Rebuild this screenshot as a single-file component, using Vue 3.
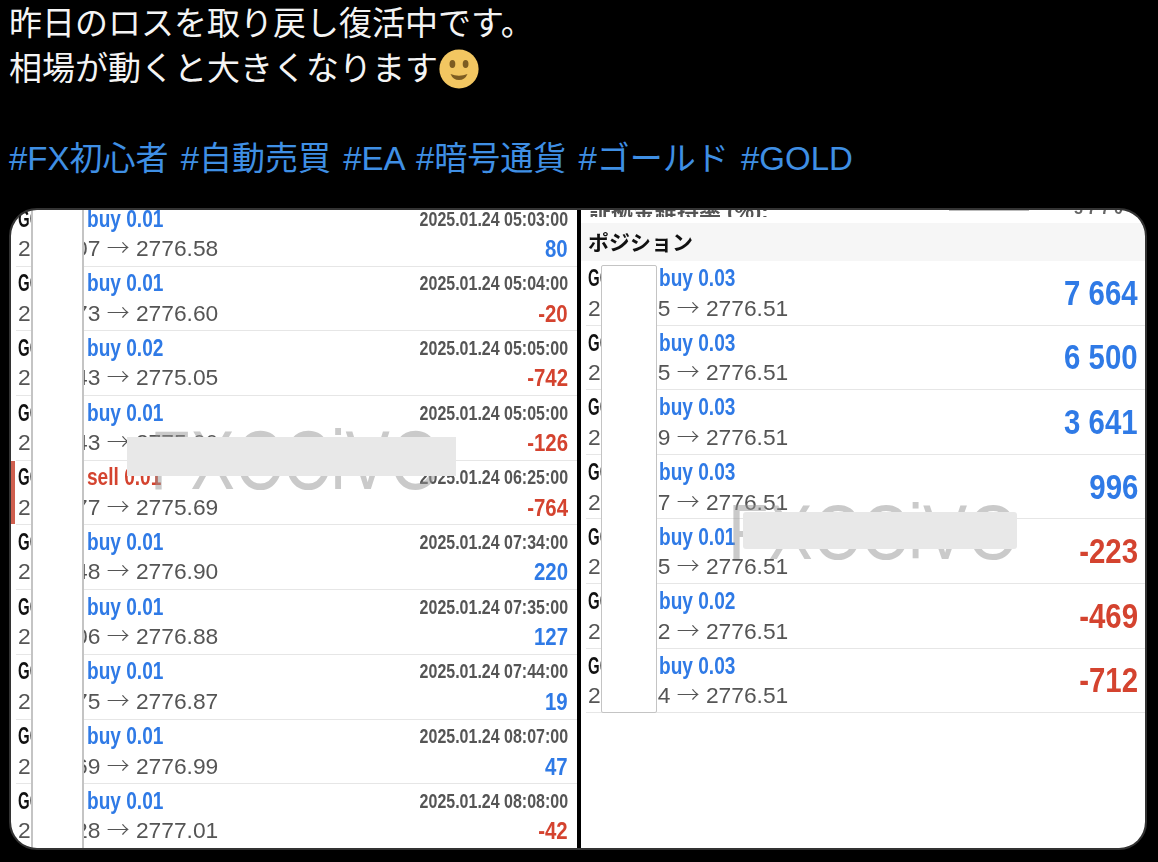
<script setup>
const leftRows = [
  { side: 'buy 0.01', time: '2025.01.24 05:03:00', open: '2775.07', close: '2776.58', val: '80' },
  { side: 'buy 0.01', time: '2025.01.24 05:04:00', open: '2776.73', close: '2776.60', val: '-20' },
  { side: 'buy 0.02', time: '2025.01.24 05:05:00', open: '2776.43', close: '2775.05', val: '-742' },
  { side: 'buy 0.01', time: '2025.01.24 05:05:00', open: '2776.43', close: '2775.00', val: '-126' },
  { side: 'sell 0.01', time: '2025.01.24 06:25:00', open: '2776.77', close: '2775.69', val: '-764' },
  { side: 'buy 0.01', time: '2025.01.24 07:34:00', open: '2775.48', close: '2776.90', val: '220' },
  { side: 'buy 0.01', time: '2025.01.24 07:35:00', open: '2775.06', close: '2776.88', val: '127' },
  { side: 'buy 0.01', time: '2025.01.24 07:44:00', open: '2776.75', close: '2776.87', val: '19' },
  { side: 'buy 0.01', time: '2025.01.24 08:07:00', open: '2776.69', close: '2776.99', val: '47' },
  { side: 'buy 0.01', time: '2025.01.24 08:08:00', open: '2777.28', close: '2777.01', val: '-42' }
]
const rightRows = [
  { side: 'buy 0.03', open: '2774.95', val: '7 664' },
  { side: 'buy 0.03', open: '2774.45', val: '6 500' },
  { side: 'buy 0.03', open: '2775.39', val: '3 641' },
  { side: 'buy 0.03', open: '2776.17', val: '996' },
  { side: 'buy 0.01', open: '2776.95', val: '-223' },
  { side: 'buy 0.02', open: '2776.92', val: '-469' },
  { side: 'buy 0.03', open: '2776.94', val: '-712' }
]
const neg = (v) => v.startsWith('-')
</script>

<template>
  <main class="page">
    <section class="tweet">
      <p>昨日のロスを取り戻し復活中です。</p>
      <p class="with-emoji">相場が動くと大きくなります<svg class="emoji" viewBox="0 0 40 40" aria-label="smile">
          <circle cx="20" cy="20" r="19.6" fill="#f2c661" />
          <ellipse cx="13.4" cy="15" rx="2.9" ry="3.9" fill="#7d5c22" />
          <ellipse cx="26.6" cy="15" rx="2.9" ry="3.9" fill="#7d5c22" />
          <path d="M11.5 25 Q20 28.5 28.5 25 Q26 31 20 31 Q14 31 11.5 25 Z" fill="#7d5c22" />
        </svg></p>
      <p class="blank">&nbsp;</p>
      <p class="tags">#FX初心者 #自動売買 #EA #暗号通貨 #ゴールド #GOLD</p>
    </section>

    <section class="card">
      <div class="panel left">
        <div class="list">
          <div v-for="(r, i) in leftRows" :key="i" class="row" :class="{ sold: r.side.startsWith('sell') }">
            <div class="line one">
              <span class="sym"><b>GOLD#</b></span>
              <span class="side" :class="{ red: r.side.startsWith('sell') }">{{ r.side }}</span>
              <span class="time">{{ r.time }}</span>
            </div>
            <div class="line two">
              <span class="price">{{ r.open }} <i>→</i> {{ r.close }}</span>
              <span class="val" :class="{ red: neg(r.val) }">{{ r.val }}</span>
            </div>
          </div>
        </div>
        <div class="mark">FXCCiVO</div>
        <div class="hide"></div>
        <div class="cover"></div>
      </div>

      <div class="panel right">
        <div class="stub">
          <span class="stub-label">証拠金維持率 (%):</span>
          <span class="stub-line"></span>
          <span class="stub-val">5 7 7 0</span>
        </div>
        <div class="head">ポジション</div>
        <div v-for="(r, i) in rightRows" :key="i" class="row pos">
          <div class="pos-text">
            <div class="line one">
              <span class="sym"><b>GOLD#</b></span>
              <span class="side">{{ r.side }}</span>
            </div>
            <div class="line two">
              <span class="price">{{ r.open }} <i>→</i> 2776.51</span>
            </div>
          </div>
          <span class="big" :class="{ red: neg(r.val) }">{{ r.val }}</span>
        </div>
        <div class="mark">FXCCiVO</div>
        <div class="hide"></div>
        <div class="cover"></div>
      </div>
    </section>
  </main>
</template>

<style>
html, body { margin: 0; background: #000; }
</style>

<style scoped>
.page {
  width: 1158px;
  height: 862px;
  background: #000;
  overflow: hidden;
  box-sizing: border-box;
  padding: 1px 11px 0 9px;
  font-family: "Liberation Sans", "Noto Sans CJK JP", sans-serif;
}
.tweet { height: 207px; color: #f4f4f4; font-size: 33px; line-height: 45px; }
.tweet p { margin: 0; white-space: nowrap; height: 45px; }
.with-emoji { display: flex; align-items: center; }
.emoji { width: 40px; height: 40px; margin-left: 1px; flex: none; }
.tags { color: #3f8fe4; word-spacing: 3px; }

.card {
  width: 1138px;
  height: 642px;
  box-sizing: border-box;
  border: 2px solid #333;
  border-radius: 28px;
  overflow: hidden;
  display: flex;
  gap: 4px;
  background: #000;
}
.panel { position: relative; background: #fff; overflow: hidden; filter: blur(0.35px); }
.left { width: 567px; }
.right { width: 565px; }
.list { margin-top: -8px; }

.row { height: 64.7px; box-sizing: border-box; border-bottom: 1.5px solid #e6e6e6; margin-left: 5px; position: relative; }
.sold::before {
  content: "";
  position: absolute;
  left: -5px;
  top: 0;
  bottom: 0;
  width: 4px;
  background: #cf5f4e;
}
.line { display: flex; align-items: center; white-space: nowrap; padding-left: 2px; }
.one { height: 32px; padding-top: 2px; box-sizing: border-box; }
.two { height: 30px; }
.sym {
  width: 69px;
  flex: none;
  overflow: hidden;
  font-size: 23px;
  color: #111;
}
.sym b { display: inline-block; transform: scaleX(0.65); transform-origin: left center; }
.side {
  display: inline-block;
  transform: scaleX(0.83);
  transform-origin: left center;
  font-weight: 700;
  font-size: 23px;
  color: #2f7ae6;
}
.side.red { color: #d4432f; }
.time {
  margin-left: auto;
  margin-right: 9px;
  transform: scaleX(0.82);
  transform-origin: right center;
  font-weight: 700;
  font-size: 19.5px;
  color: #555;
}
.price { font-size: 22.8px; line-height: 26px; height: 26px; margin-top: -2px; color: #555; }
.price i { font-style: normal; font-family: "Noto Sans CJK JP", sans-serif; font-weight: 300; line-height: 1; }
.val {
  margin-left: auto;
  margin-right: 9px;
  transform: scaleX(0.85);
  transform-origin: right center;
  font-weight: 700;
  font-size: 24px;
  color: #2f7ae6;
}
.val.red { color: #d4432f; }

.left .cover {
  position: absolute;
  left: 20px;
  top: -2px;
  bottom: -2px;
  width: 53px;
  box-sizing: border-box;
  background: #fff;
  border: 1px solid #c4c4c4;
  border-width: 0 2px;
}
.left .mark {
  left: 139px;
  top: 206px;
  font-size: 84px;
  transform: scaleX(0.79);
}
.left .hide { position: absolute; left: 116px; top: 227px; width: 329px; height: 39px; background: #e8e8e8; }

.stub { height: 16px; margin-top: -9px; padding-left: 8px; display: flex; align-items: center; color: #666; font-size: 22px; overflow: hidden; white-space: nowrap; }
.stub-label { font-weight: 700; color: #555; }
.stub-line { margin-left: auto; margin-right: 45px; width: 80px; height: 1px; background: #bbb; align-self: flex-start; margin-top: 9px; }
.stub-val { width: 71px; font-weight: 700; font-size: 16px; }
.head {
  height: 38px;
  margin-top: 6px;
  box-sizing: border-box;
  padding: 0 0 3px 7px;
  background: #f6f6f6;
  display: flex;
  align-items: center;
  font-size: 21px;
  font-weight: 700;
  color: #111;
  font-family: "Noto Sans CJK JP", sans-serif;
}
.pos { display: flex; align-items: center; height: 64.6px; margin-left: 5px; }
.pos .sym { width: 71px; }
.pos-text { flex: none; }
.big {
  margin-left: auto;
  margin-right: 7px;
  transform: scaleX(0.84);
  transform-origin: right center;
  font-weight: 700;
  font-size: 35px;
  color: #2f7ae6;
}
.big.red { color: #d4432f; }

.right .cover {
  position: absolute;
  left: 20px;
  top: 55px;
  width: 56px;
  height: 448px;
  box-sizing: border-box;
  background: #fff;
  border: 1.5px solid #c4c4c4;
  border-radius: 2px;
}
.right .mark { left: 147px; top: 278px; font-size: 77px; transform: scaleX(0.86); }
.right .hide { position: absolute; left: 162px; top: 302px; width: 274px; height: 37px; background: #e8e8e8; border-radius: 3px; }

.mark {
  position: absolute;
  transform-origin: left center;
  line-height: 88px;
  color: rgba(150, 150, 150, 0.5);
  white-space: nowrap;
}
</style>
